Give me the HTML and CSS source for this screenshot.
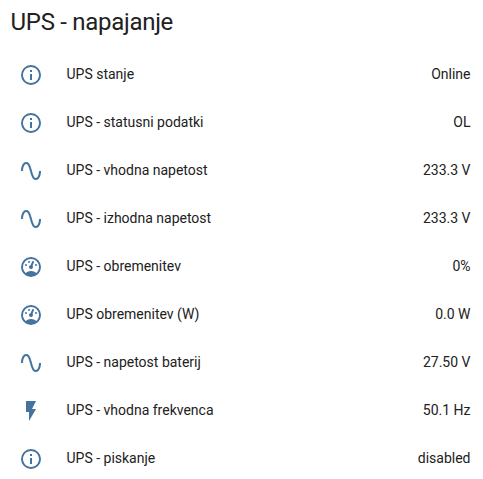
FILE: index.html
```
<!DOCTYPE html>
<html lang="sl">
<head>
    <meta charset="UTF-8">
    <meta name="viewport" content="width=device-width, initial-scale=1.0">
    <title>UPS - napajanje</title>
    <link rel="stylesheet" href="styles.css">
</head>
<body>

    <!-- icon shapes shared by the rows -->
    <svg class="icon-defs">
        <symbol id="info" viewBox="0 0 24 24">
            <path d="M11,9H13V7H11M12,20C7.59,20 4,16.41 4,12C4,7.59 7.59,4 12,4C16.41,4 20,7.59 20,12C20,16.41 16.41,20 12,20M12,2A10,10 0 0,0 2,12A10,10 0 0,0 12,22A10,10 0 0,0 22,12A10,10 0 0,0 12,2M11,17H13V11H11V17Z"/>
        </symbol>
        <symbol id="sine" viewBox="0 0 24 24">
            <path d="M16.5,21C13.5,21 12.31,16.76 11.05,12.28C10.14,9.04 9,5 7.5,5C4.11,5 4,11.93 4,12H2C2,11.63 2.06,3 7.5,3C10.5,3 11.71,7.25 12.97,11.74C13.83,14.8 15,19 16.5,19C19.94,19 20.03,12.07 20.03,12H22.03C22.03,12.37 21.97,21 16.5,21Z"/>
        </symbol>
        <symbol id="gauge" viewBox="0 0 24 24">
            <path d="M12,2A10,10 0 0,0 2,12A10,10 0 0,0 12,22A10,10 0 0,0 22,12A10,10 0 0,0 12,2M12,4A8,8 0 0,1 20,12C20,14.4 19,16.5 17.3,18C15.9,16.7 14,16 12,16C10,16 8.2,16.7 6.7,18C5,16.5 4,14.4 4,12A8,8 0 0,1 12,4M14,5.89C13.62,5.9 13.26,6.15 13.1,6.54L11.81,9.77L11.71,10C11,10.13 10.41,10.6 10.14,11.26C9.73,12.29 10.23,13.45 11.26,13.86C12.29,14.27 13.45,13.77 13.86,12.74C14.12,12.08 14,11.32 13.57,10.76L13.67,10.5L14.96,7.29L14.97,7.26C15.17,6.75 14.92,6.17 14.41,5.96C14.28,5.91 14.15,5.89 14,5.89M10,6A1,1 0 0,0 9,7A1,1 0 0,0 10,8A1,1 0 0,0 11,7A1,1 0 0,0 10,6M7,9A1,1 0 0,0 6,10A1,1 0 0,0 7,11A1,1 0 0,0 8,10A1,1 0 0,0 7,9M17,9A1,1 0 0,0 16,10A1,1 0 0,0 17,11A1,1 0 0,0 18,10A1,1 0 0,0 17,9Z"/>
        </symbol>
        <symbol id="flash" viewBox="0 0 24 24">
            <path d="M7,2V13H10V22L17,10H13L17,2H7Z"/>
        </symbol>
    </svg>

    <div class="card">
        <h1 class="card-header">UPS - napajanje</h1>
        <ul class="entities">
            <li><svg class="icon"><use href="#info"/></svg><span class="name">UPS stanje</span><span class="state">Online</span></li>
            <li><svg class="icon"><use href="#info"/></svg><span class="name">UPS - statusni podatki</span><span class="state">OL</span></li>
            <li><svg class="icon"><use href="#sine"/></svg><span class="name">UPS - vhodna napetost</span><span class="state">233.3 V</span></li>
            <li><svg class="icon"><use href="#sine"/></svg><span class="name">UPS - izhodna napetost</span><span class="state">233.3 V</span></li>
            <li><svg class="icon"><use href="#gauge"/></svg><span class="name">UPS - obremenitev</span><span class="state">0%</span></li>
            <li><svg class="icon"><use href="#gauge"/></svg><span class="name">UPS obremenitev (W)</span><span class="state">0.0 W</span></li>
            <li><svg class="icon"><use href="#sine"/></svg><span class="name">UPS - napetost baterij</span><span class="state">27.50 V</span></li>
            <li><svg class="icon"><use href="#flash"/></svg><span class="name">UPS - vhodna frekvenca</span><span class="state">50.1 Hz</span></li>
            <li><svg class="icon"><use href="#info"/></svg><span class="name">UPS - piskanje</span><span class="state">disabled</span></li>
        </ul>
    </div>

</body>
</html>
```
FILE: styles.css
```
body {
    font-family: Roboto, sans-serif;
    font-size: 14px;
    line-height: 20px;
    background-color: #fff;
    margin: 0;
    color: #212121;
}
.icon-defs {
    display: none;
}
.card {
    height: 479px;
    overflow: hidden;
}
.card-header {
    margin: 0;
    padding: 2px 10.5px 13px;
    font-size: 24px;
    font-weight: 400;
    line-height: 40px;
    letter-spacing: -0.288px;
}
.entities {
    list-style: none;
    margin: 0;
    padding: 0 12.5px 0 19px;
}
.entities li {
    display: flex;
    align-items: center;
    height: 40px;
    margin-bottom: 8px;
}
.icon {
    width: 24px;
    height: 24px;
    fill: #44739e;
}
.name, .state {
    padding-bottom: 2px;
}
.name {
    flex: 1;
    margin-left: 23.5px;
}
```
